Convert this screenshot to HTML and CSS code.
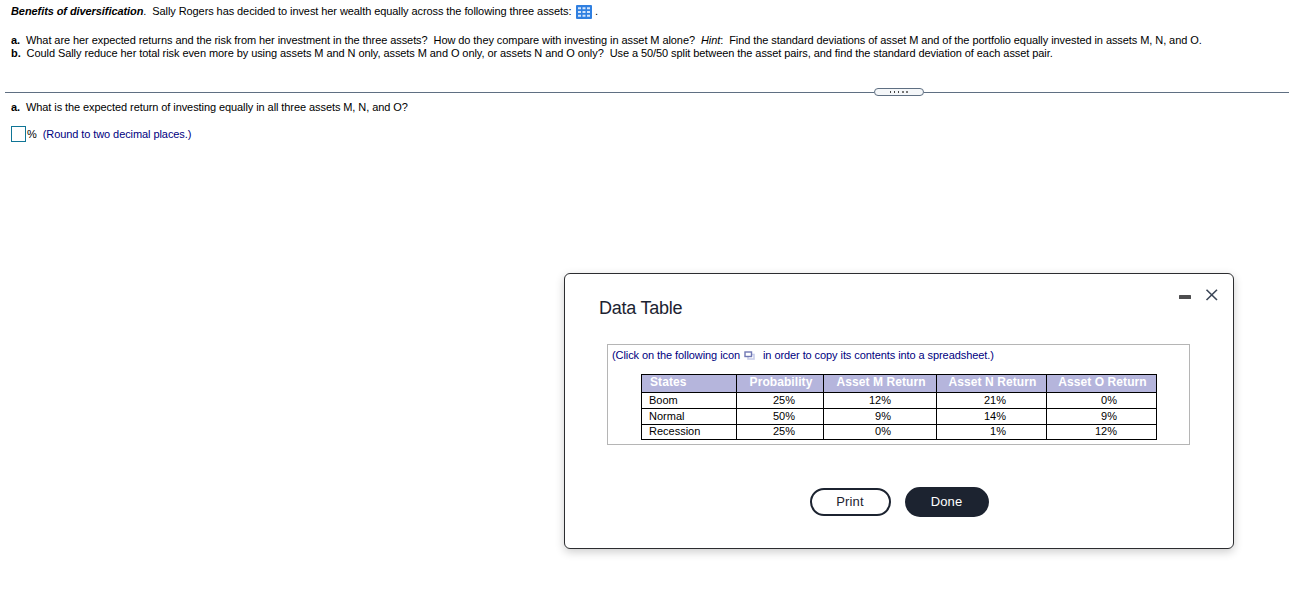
FILE: index.html
```
<!DOCTYPE html>
<html lang="en">

<head>
  <meta charset="UTF-8" />
  <meta name="viewport" content="width=device-width, initial-scale=1.0"/>
  <title>Benefits of diversification</title>
  <link rel="stylesheet" href="styles.css">
</head>

<body>

  <div class="problem">
    <p class="intro">
      <span class="intro-text"><b><i>Benefits of diversification</i></b>.&nbsp; Sally Rogers has decided to invest her wealth equally across the following three assets:</span>
      <svg class="table-icon" width="16" height="14" viewBox="0 0 16 14">
        <rect width="16" height="14" rx="1" fill="#2f7fe0"/>
        <path fill="#d3e5fb" d="M2 2.300h3v2H2zM6.500 2.300h3v2h-3zM11 2.300h3v2h-3zM2 6h3v2H2zM6.500 6h3v2h-3zM11 6h3v2h-3zM2 9.700h3v2H2zM6.500 9.700h3v2h-3zM11 9.700h3v2h-3z"/>
      </svg>
      <span>.</span>
    </p>
    <p class="part part-a"><b>a.</b>&nbsp; What are her expected returns and the risk from her investment in the three assets?&nbsp; How do they compare with investing in asset M alone?&nbsp; <i>Hint</i>:&nbsp; Find the standard deviations of asset M and of the portfolio equally invested in assets M, N, and O.</p>
    <p class="part part-b"><b>b.</b>&nbsp; Could Sally reduce her total risk even more by using assets M and N only, assets M and O only, or assets N and O only?&nbsp; Use a 50/50 split between the asset pairs, and find the standard deviation of each asset pair.</p>
  </div>

  <!-- Resize handle between problem and answer -->
  <div class="divider">
    <div class="handle"><i></i><i></i><i></i><i></i><i></i></div>
  </div>

  <div class="question">
    <p class="part question-a"><b>a.</b>&nbsp; What is the expected return of investing equally in all three assets M, N, and O?</p>
    <div class="answer">
      <input type="text" class="answer-box" aria-label="Expected return" />
      <span>%</span>
      <span class="hint">(Round to two decimal places.)</span>
    </div>
  </div>

  <!-- Data table window -->
  <div class="dialog">
    <div class="dialog-head">
      <h1>Data Table</h1>
      <svg class="window-icons" width="40" height="12" viewBox="0 0 40 12">
        <rect x="0" y="6" width="12" height="4" rx="0.500" fill="#4d4d4f"/>
        <path d="M27.500 0.800l10.500 10.200M38 0.800L27.500 11" fill="none" stroke="#3b4657" stroke-width="1.600"/>
      </svg>
    </div>

    <div class="data">
      <p class="copy">
        <span class="copy-start">(Click on the following icon</span>
        <svg width="11" height="9" viewBox="0 0 11 9">
          <rect x="4" y="3.500" width="6" height="4.500" fill="#fff" stroke="#c9cdea" stroke-width="1.600"/>
          <rect x="1" y="1" width="6.500" height="4.500" fill="#fff" stroke="#7078b4" stroke-width="1.400"/>
        </svg>
        <span class="copy-end">in order to copy its contents into a spreadsheet.)</span>
      </p>
      <table>
        <colgroup><col class="c1"><col class="c2"><col class="c3"><col class="c4"><col class="c5"></colgroup>
        <tr class="head"><th>States</th><th>Probability</th><th>Asset M Return</th><th>Asset N Return</th><th>Asset O Return</th></tr>
        <tr class="boom"><td>Boom</td><td>25%</td><td>12%</td><td>21%</td><td>0%</td></tr>
        <tr class="normal"><td>Normal</td><td>50%</td><td>9%</td><td>14%</td><td>9%</td></tr>
        <tr class="recession"><td>Recession</td><td>25%</td><td>0%</td><td>1%</td><td>12%</td></tr>
      </table>
    </div>

    <div class="buttons">
      <button class="print">Print</button>
      <button class="done">Done</button>
    </div>
  </div>

</body>
</html>
```
FILE: styles.css
```
* {
  margin: 0;
  padding: 0;
  box-sizing: border-box;
}

body {
  height: 595px;
  background: #fff;
  color: #000;
  font: 11px/13px "Liberation Sans", Arial, sans-serif;
  letter-spacing: -0.08px;
  overflow: hidden;
}

.problem {
  height: 86px;
  padding: 5px 0 0 11px;
}

.intro {
  display: flex;
  align-items: center;
  height: 14px;
  margin-bottom: 15px;
}

.intro span {
  padding-bottom: 2px;
}

.intro-text {
  width: 565px;
  white-space: nowrap;
}

.table-icon {
  margin-right: 3px;
}

.part {
  height: 13px;
  white-space: nowrap;
}

.part-a,
.part-b {
  letter-spacing: -0.075px;
}

.divider {
  display: flex;
  align-items: center;
  height: 12px;
  margin-left: 5px;
}

.divider::before,
.divider::after {
  content: "";
  height: 1px;
  background: #5f6f82;
}

.divider::before {
  width: 869px;
}

.divider::after {
  flex: 1;
}

.handle {
  display: flex;
  justify-content: center;
  align-items: center;
  gap: 3px;
  width: 50px;
  height: 8px;
  padding-right: 1px;
  border: 1px solid #5f6f82;
  border-radius: 4px;
  background: #f5f7f9;
}

.handle i {
  width: 1px;
  height: 2px;
  background: #444;
}

.handle i:nth-child(n+4) {
  width: 2px;
  margin-right: -1px;
  background: #777;
}

.question {
  padding: 3px 0 0 11px;
}

.answer {
  display: flex;
  align-items: center;
  height: 16px;
  margin-top: 12px;
}

.answer-box {
  width: 15px;
  height: 16px;
  margin-right: 1px;
  border: 1px solid #0f7596;
}

.hint {
  margin-left: 6px;
  color: #000080;
}

.dialog {
  position: absolute;
  top: 273px;
  left: 564px;
  width: 670px;
  height: 276px;
  border: 1px solid #2c2d30;
  border-radius: 6px;
  background: #fff;
  box-shadow: 0 3px 10px rgba(0, 0, 0, 0.2);
}

.dialog-head {
  display: flex;
  justify-content: space-between;
  height: 70px;
  padding: 15px 14px 0 34px;
}

h1 {
  padding-top: 8px;
  color: #1c2331;
  font-size: 18px;
  font-weight: normal;
  letter-spacing: -0.25px;
  line-height: 22px;
}

.data {
  width: 583px;
  height: 101px;
  margin-left: 42px;
  border: 1px solid #b5b5b5;
}

.copy {
  display: flex;
  align-items: center;
  height: 21px;
  padding-left: 4px;
  color: #000080;
  white-space: nowrap;
}

.copy-start {
  width: 132px;
}

.copy-end {
  margin-left: 8px;
}

table {
  width: 516px;
  margin: 8px 0 0 33px;
  border-collapse: collapse;
  table-layout: fixed;
}

.c1 { width: 95px; }
.c2 { width: 87px; }
.c3 { width: 113px; }
.c4 { width: 110px; }
.c5 { width: 110px; }

th,
td {
  border: 1px solid #000;
  line-height: 13px;
}

th {
  padding: 0 0 2px 2px;
  background: #b5b5dc;
  color: #fff;
  font-size: 12px;
  letter-spacing: 0.08px;
  text-align: center;
  white-space: nowrap;
}

th:first-child {
  padding-left: 8px;
  text-align: left;
}

td {
  letter-spacing: 0;
  text-align: right;
}

td:nth-child(1) {
  padding-left: 7px;
  text-align: left;
}

td:nth-child(2) { padding-right: 28px; }
td:nth-child(3) { padding-right: 45px; }
td:nth-child(4) { padding-right: 40px; }
td:nth-child(5) { padding-right: 39px; }

.head { height: 18px; }
.boom { height: 16px; }
.normal { height: 16px; }
.recession { height: 15px; }

.recession td {
  padding-bottom: 2px;
  line-height: 12px;
}

.buttons {
  display: flex;
  justify-content: center;
  align-items: center;
  gap: 14px;
  margin-top: 42px;
}

button {
  padding-bottom: 2px;
  border: 2px solid #1c2330;
  border-radius: 15px;
  font: 13px "Liberation Sans", Arial, sans-serif;
  letter-spacing: 0.15px;
}

.print {
  width: 81px;
  height: 28px;
  background: #fff;
  color: #1c2330;
}

.done {
  width: 84px;
  height: 30px;
  background: #1c2330;
  color: #fff;
}
```
